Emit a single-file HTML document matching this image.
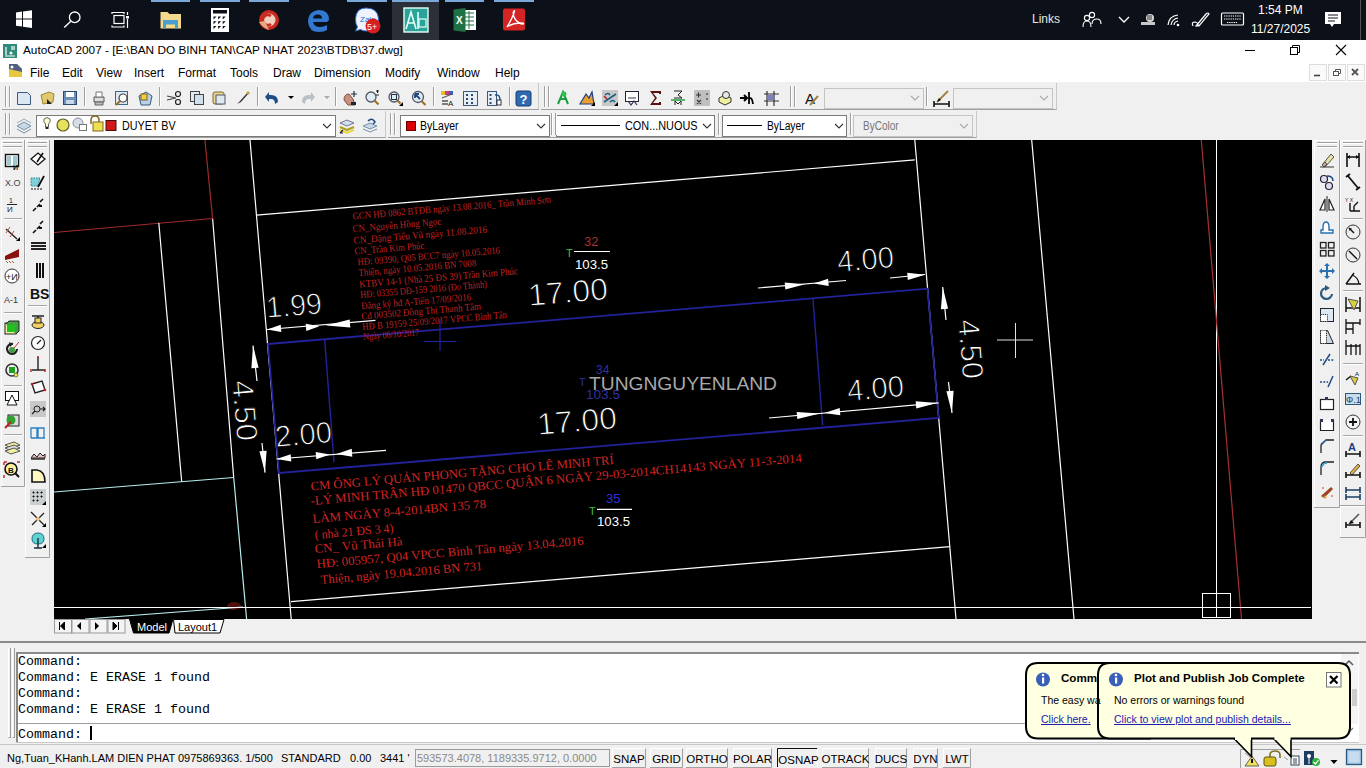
<!DOCTYPE html>
<html><head><meta charset="utf-8">
<style>
*{margin:0;padding:0;box-sizing:border-box}
html,body{width:1366px;height:768px;overflow:hidden;background:#f0f0f0;font-family:"Liberation Sans",sans-serif;color:#000}
.a{position:absolute}
.t{position:absolute;white-space:nowrap;line-height:1}
#taskbar{left:0;top:0;width:1366px;height:40px;background:#0c1119}
.hl{position:absolute;top:0;height:2px;background:#7aa8d8}
#title{left:0;top:40px;width:1366px;height:22px;background:#fff}
#menu{left:0;top:62px;width:1366px;height:20px;background:#fff}
.mi{position:absolute;top:66px;font-size:12px}
.tb{position:absolute;background:#f0f0f0;border-bottom:1px solid #a0a0a0;border-right:1px solid #c8c8c8}
.sep{position:absolute;width:2px;border-left:1px solid #a0a0a0;border-right:1px solid #fff}
.grip{position:absolute;width:5px;border-left:1px solid #a0a0a0;border-right:1px solid #a0a0a0}
.cb{position:absolute;background:#fff;border:1px solid #7a7a7a;height:22px}
.cbd{background:#f0f0f0;border-color:#c4c4c4}
.chev{position:absolute;right:6px;top:7px;width:8px;height:8px}
#draw{left:54px;top:140px;width:1258px;height:479px;background:#000;overflow:hidden}
.cmdt{position:absolute;left:18px;font-family:"Liberation Mono",monospace;font-size:13.33px;line-height:1;color:#000}
.sb{position:absolute;top:748px;height:19px;font-size:12px;border:1px solid #a0a0a0;border-top-color:#fff;border-left-color:#fff;padding-top:3px;text-align:center}
</style></head><body>

<!-- TASKBAR -->
<div id="taskbar" class="a">
  <div class="hl" style="left:151px;width:39px"></div>
  <div class="hl" style="left:200px;width:40px"></div>
  <div class="hl" style="left:249px;width:40px"></div>
  <div class="hl" style="left:347px;width:40px"></div>
  <div class="a" style="left:392px;top:0;width:47px;height:40px;background:#2b3038"></div>
  <div class="hl" style="left:392px;width:47px"></div>
  <div class="hl" style="left:445px;width:39px"></div>
  <div class="hl" style="left:494px;width:40px"></div>
  <div class="t" style="left:1032px;top:13px;font-size:12px;color:#e8e8e8">Links</div>
  <div class="t" style="left:1258px;top:4px;font-size:12px;color:#fff">1:54 PM</div>
  <div class="t" style="left:1251px;top:23px;font-size:12px;color:#fff">11/27/2025</div>
  <div class="a" style="left:1360px;top:0;width:1px;height:40px;background:#555"></div>
</div>

<!-- TITLE -->
<div id="title" class="a"></div>
<div class="t" style="left:23px;top:45px;font-size:11.8px">AutoCAD 2007 - [E:\BAN DO BINH TAN\CAP NHAT 2023\BTDB\37.dwg]</div>
<div id="menu" class="a"></div>
<div class="mi" style="left:30px">File</div>
<div class="mi" style="left:62px">Edit</div>
<div class="mi" style="left:96px">View</div>
<div class="mi" style="left:134px">Insert</div>
<div class="mi" style="left:178px">Format</div>
<div class="mi" style="left:230px">Tools</div>
<div class="mi" style="left:273px">Draw</div>
<div class="mi" style="left:314px">Dimension</div>
<div class="mi" style="left:385px">Modify</div>
<div class="mi" style="left:437px">Window</div>
<div class="mi" style="left:495px">Help</div>

<!-- TOOLBARS -->
<div class="a" style="left:0;top:82px;width:1366px;height:58px;background:#f0f0f0"></div>
<div class="tb" style="left:2px;top:83px;width:537px;height:27px"></div>
<div class="tb" style="left:541px;top:83px;width:516px;height:27px"></div>
<div class="tb" style="left:2px;top:111px;width:384px;height:27px"></div>
<div class="tb" style="left:388px;top:111px;width:589px;height:27px"></div>

<div class="cb" style="left:36px;top:115px;width:300px;"></div>
<div class="t" style="left:122px;top:120px;font-size:12.5px;transform:scaleX(0.86);transform-origin:0 0">DUYET BV</div>
<div class="cb" style="left:400px;top:115px;width:150px"></div>
<div class="a" style="left:406px;top:121px;width:10px;height:10px;background:#d00;border:1px solid #600"></div>
<div class="t" style="left:420px;top:120px;font-size:12.5px;transform:scaleX(0.84);transform-origin:0 0">ByLayer</div>
<div class="cb" style="left:556px;top:115px;width:159px"></div>
<div class="a" style="left:561px;top:125px;width:59px;height:1px;background:#000"></div>
<div class="t" style="left:625px;top:120px;font-size:12.5px;transform:scaleX(0.87);transform-origin:0 0">CON...NUOUS</div>
<div class="cb" style="left:722px;top:115px;width:125px"></div>
<div class="a" style="left:727px;top:125px;width:35px;height:1px;background:#000"></div>
<div class="t" style="left:767px;top:120px;font-size:12.5px;transform:scaleX(0.82);transform-origin:0 0">ByLayer</div>
<div class="cb cbd" style="left:853px;top:115px;width:120px"></div>
<div class="t" style="left:863px;top:120px;font-size:12.5px;color:#777;transform:scaleX(0.8);transform-origin:0 0">ByColor</div>
<div class="cb cbd" style="left:824px;top:88px;width:100px;height:21px"></div>
<div class="cb cbd" style="left:953px;top:88px;width:100px;height:21px"></div>

<!-- SIDE TOOLBARS -->
<div class="a" style="left:0;top:140px;width:54px;height:500px;background:#f0f0f0"></div>

<!-- DRAWING -->
<div id="draw" class="a"></div>
<svg class="a" style="left:54px;top:140px" width="1258" height="479" viewBox="54 140 1258 479" xmlns="http://www.w3.org/2000/svg">
<ellipse cx="234" cy="606" rx="7" ry="4" fill="#501010"/>
<line x1="250" y1="140" x2="291.2" y2="619" stroke="#ffffff" stroke-width="1.2" />
<line x1="212.6" y1="218.5" x2="233.7" y2="477.5" stroke="#ffffff" stroke-width="1.2" />
<line x1="233.7" y1="477.5" x2="246.6" y2="619" stroke="#b8ecec" stroke-width="1.2" />
<line x1="204.9" y1="140" x2="212.6" y2="218.5" stroke="#a02a2a" stroke-width="1.2" />
<line x1="54" y1="232.5" x2="212.6" y2="218.5" stroke="#a02a2a" stroke-width="1.2" />
<line x1="158.8" y1="222.9" x2="181.7" y2="481.7" stroke="#ffffff" stroke-width="1.2" />
<line x1="54" y1="492" x2="233.7" y2="477.5" stroke="#b8ecec" stroke-width="1.2" />
<line x1="85" y1="619" x2="243" y2="607" stroke="#b8ecec" stroke-width="1.2" />
<line x1="256.5" y1="215.2" x2="914.8" y2="159.9" stroke="#ffffff" stroke-width="1.2" />
<line x1="914.8" y1="140" x2="956" y2="619" stroke="#ffffff" stroke-width="1.2" />
<line x1="1031.7" y1="140" x2="1074" y2="619" stroke="#ffffff" stroke-width="1.2" />
<line x1="1216.5" y1="140" x2="1216.5" y2="607.5" stroke="#ffffff" stroke-width="1" />
<line x1="1201.3" y1="140" x2="1241.5" y2="619" stroke="#a83030" stroke-width="1.2" />
<line x1="291" y1="601.7" x2="950" y2="546.7" stroke="#ffffff" stroke-width="1.2" />
<line x1="54" y1="607.5" x2="1311" y2="607.5" stroke="#ffffff" stroke-width="1.2" />
<rect x="1202.5" y="593.5" width="28" height="24" fill="none" stroke="#fff" stroke-width="1"/>
<line x1="1216.5" y1="593.5" x2="1216.5" y2="617.5" stroke="#ffffff" stroke-width="1" />
<line x1="997" y1="340" x2="1033" y2="340" stroke="#e0e0e0" stroke-width="1" />
<line x1="1015.5" y1="323" x2="1015.5" y2="358" stroke="#e0e0e0" stroke-width="1" />
<polygon points="268,344 927.5,288.7 938.7,418 279,473" fill="none" stroke="#22229a" stroke-width="1.8"/>
<line x1="324.6" y1="339" x2="334" y2="462" stroke="#22229a" stroke-width="1.4" />
<line x1="813" y1="299" x2="822.6" y2="425.6" stroke="#22229a" stroke-width="1.4" />
<line x1="440" y1="319" x2="440" y2="351" stroke="#22229a" stroke-width="1.2" />
<line x1="424" y1="341.5" x2="456" y2="341.5" stroke="#22229a" stroke-width="1.2" />
<line x1="267" y1="329.5" x2="375.4" y2="320.4" stroke="#ffffff" stroke-width="1.2" />
<polygon points="267.3,329.5 281.3,331.9 280.7,324.7" fill="#ffffff"/>
<polygon points="319.4,326.2 305.7,323.7 306.3,330.9" fill="#ffffff"/>
<polygon points="326.0,325.6 350.3,327.6 349.7,319.6" fill="#ffffff"/>
<text x="267" y="318" font-family="Liberation Sans" font-size="30" fill="#ffffff" transform="rotate(-4.8 267 318)" textLength="56" lengthAdjust="spacingAndGlyphs"  stroke="#000" stroke-width="0.9">1.99</text>
<line x1="758" y1="288" x2="846" y2="280.5" stroke="#ffffff" stroke-width="1.2" />
<polygon points="805.0,284.3 784.7,282.4 785.3,289.6" fill="#ffffff"/>
<polygon points="813.8,283.6 828.7,286.0 828.1,278.8" fill="#ffffff"/>
<line x1="890" y1="278" x2="925" y2="274.5" stroke="#ffffff" stroke-width="1.2" />
<polygon points="925.0,274.8 907.2,272.7 907.8,279.9" fill="#ffffff"/>
<text x="529" y="306" font-family="Liberation Sans" font-size="31" fill="#ffffff" transform="rotate(-4.8 529 306)" textLength="80" lengthAdjust="spacingAndGlyphs"  stroke="#000" stroke-width="0.9">17.00</text>
<text x="838" y="272" font-family="Liberation Sans" font-size="30" fill="#ffffff" transform="rotate(-4.8 838 272)" textLength="57" lengthAdjust="spacingAndGlyphs"  stroke="#000" stroke-width="0.9">4.00</text>
<line x1="942.7" y1="287" x2="946" y2="320" stroke="#ffffff" stroke-width="1.2" />
<polygon points="942.7,287.0 940.9,309.3 948.1,308.7" fill="#ffffff"/>
<line x1="948.5" y1="382" x2="952" y2="413" stroke="#ffffff" stroke-width="1.2" />
<polygon points="952.0,413.0 953.6,390.7 946.4,391.3" fill="#ffffff"/>
<text x="958" y="320" font-family="Liberation Sans" font-size="30" fill="#ffffff" transform="rotate(85.2 958 320)" textLength="60" lengthAdjust="spacingAndGlyphs"  stroke="#000" stroke-width="0.9">4.50</text>
<line x1="253" y1="345.6" x2="257" y2="381" stroke="#ffffff" stroke-width="1.2" />
<polygon points="253.0,345.6 251.4,368.3 258.6,367.7" fill="#ffffff"/>
<line x1="262" y1="443" x2="265" y2="472.6" stroke="#ffffff" stroke-width="1.2" />
<polygon points="265.0,472.6 266.6,450.7 259.4,451.3" fill="#ffffff"/>
<text x="232" y="381" font-family="Liberation Sans" font-size="30" fill="#ffffff" transform="rotate(85.2 232 381)" textLength="61" lengthAdjust="spacingAndGlyphs"  stroke="#000" stroke-width="0.9">4.50</text>
<line x1="276.6" y1="459" x2="386" y2="450.3" stroke="#ffffff" stroke-width="1.2" />
<polygon points="276.6,459.0 291.3,461.4 290.7,454.2" fill="#ffffff"/>
<polygon points="330.0,454.6 315.7,452.1 316.3,459.3" fill="#ffffff"/>
<polygon points="336.5,454.1 352.3,456.8 351.7,448.8" fill="#ffffff"/>
<text x="276" y="447" font-family="Liberation Sans" font-size="30" fill="#ffffff" transform="rotate(-4.8 276 447)" textLength="57" lengthAdjust="spacingAndGlyphs"  stroke="#000" stroke-width="0.9">2.00</text>
<text x="538" y="435" font-family="Liberation Sans" font-size="31" fill="#ffffff" transform="rotate(-4.8 538 435)" textLength="80" lengthAdjust="spacingAndGlyphs"  stroke="#000" stroke-width="0.9">17.00</text>
<line x1="769" y1="418" x2="938.7" y2="402.8" stroke="#ffffff" stroke-width="1.2" />
<polygon points="820.0,413.5 796.7,411.9 797.3,419.1" fill="#ffffff"/>
<polygon points="824.5,413.1 840.3,415.3 839.7,408.1" fill="#ffffff"/>
<polygon points="937.0,403.0 915.7,401.2 916.3,408.4" fill="#ffffff"/>
<text x="848" y="401" font-family="Liberation Sans" font-size="30" fill="#ffffff" transform="rotate(-4.8 848 401)" textLength="57" lengthAdjust="spacingAndGlyphs"  stroke="#000" stroke-width="0.9">4.00</text>
<text x="584" y="246" font-family="Liberation Sans" font-size="13" fill="#a83030" transform="rotate(0 584 246)" >32</text>
<line x1="574" y1="251.5" x2="610" y2="251.5" stroke="#ffffff" stroke-width="1.2" />
<text x="575" y="269" font-family="Liberation Sans" font-size="13.5" fill="#ffffff" transform="rotate(0 575 269)" textLength="33" lengthAdjust="spacingAndGlyphs" >103.5</text>
<text x="566" y="257" font-family="Liberation Sans" font-size="11" fill="#40c040" transform="rotate(0 566 257)" >T</text>
<text x="596" y="374" font-family="Liberation Sans" font-size="12" fill="#3030a0" transform="rotate(0 596 374)" >34</text>
<text x="579" y="386" font-family="Liberation Sans" font-size="11" fill="#3030a0" transform="rotate(0 579 386)" >T</text>
<text x="586" y="399" font-family="Liberation Sans" font-size="12" fill="#3030a0" transform="rotate(0 586 399)" textLength="34" lengthAdjust="spacingAndGlyphs" >103.5</text>
<text x="606" y="503" font-family="Liberation Sans" font-size="13" fill="#3030d8" transform="rotate(0 606 503)" >35</text>
<line x1="597" y1="509.4" x2="632" y2="509.4" stroke="#ffffff" stroke-width="1.2" />
<text x="597" y="526" font-family="Liberation Sans" font-size="13.5" fill="#ffffff" transform="rotate(0 597 526)" textLength="33" lengthAdjust="spacingAndGlyphs" >103.5</text>
<text x="589" y="515" font-family="Liberation Sans" font-size="11" fill="#40c040" transform="rotate(0 589 515)" >T</text>
<text x="589" y="389.5" font-family="Liberation Sans" font-size="17.5" fill="#a8a8a8" transform="rotate(0 589 389.5)" textLength="188" lengthAdjust="spacingAndGlyphs" >TUNGNGUYENLAND</text>
<text x="311" y="490.5" font-family="Liberation Serif" font-size="12.5" fill="#d02424" transform="rotate(-5 311 490.5)" textLength="304" lengthAdjust="spacingAndGlyphs" >CM ÔNG LÝ QUẢN PHONG TẶNG CHO LÊ MINH TRÍ</text>
<text x="311" y="505" font-family="Liberation Serif" font-size="12.5" fill="#d02424" transform="rotate(-5 311 505)" textLength="493" lengthAdjust="spacingAndGlyphs" >-LÝ MINH TRÂN HĐ 01470 QBCC QUẬN 6  NGÀY 29-03-2014CH14143 NGÀY 11-3-2014</text>
<text x="313" y="523" font-family="Liberation Serif" font-size="12.5" fill="#d02424" transform="rotate(-5 313 523)" textLength="174" lengthAdjust="spacingAndGlyphs" >LÀM NGÀY 8-4-2014BN 135 78</text>
<text x="315" y="539" font-family="Liberation Serif" font-size="12.5" fill="#d02424" transform="rotate(-5 315 539)" textLength="79" lengthAdjust="spacingAndGlyphs" >( nhà 21 ĐS 3 4)</text>
<text x="315" y="553" font-family="Liberation Serif" font-size="12.5" fill="#d02424" transform="rotate(-5 315 553)" textLength="88" lengthAdjust="spacingAndGlyphs" >CN_ Vũ Thái Hà</text>
<text x="317" y="568" font-family="Liberation Serif" font-size="12.5" fill="#d02424" transform="rotate(-5 317 568)" textLength="268" lengthAdjust="spacingAndGlyphs" >HĐ: 005957, Q04 VPCC Bình Tân ngày 13.04.2016</text>
<text x="321" y="584" font-family="Liberation Serif" font-size="12.5" fill="#d02424" transform="rotate(-5 321 584)" textLength="162" lengthAdjust="spacingAndGlyphs" >Thiện, ngày 19.04.2016 BN 731</text>
<text x="352.8" y="219.4" font-family="Liberation Serif" font-size="10" fill="#c02020" transform="rotate(-4.8 352.8 219.4)" textLength="199" lengthAdjust="spacingAndGlyphs" >GCN HĐ 0862 BTĐB ngày 13.08.2016_ Trần Minh Sơn</text>
<text x="352.8" y="232.1" font-family="Liberation Serif" font-size="10" fill="#c02020" transform="rotate(-4.8 352.8 232.1)" textLength="89" lengthAdjust="spacingAndGlyphs" >CN_Nguyễn Hồng Ngọc</text>
<text x="353.8" y="243.8" font-family="Liberation Serif" font-size="10" fill="#c02020" transform="rotate(-4.8 353.8 243.8)" textLength="134" lengthAdjust="spacingAndGlyphs" >CN_Đặng Tiểu Vũ ngày 11.08.2016</text>
<text x="354.8" y="254.6" font-family="Liberation Serif" font-size="10" fill="#c02020" transform="rotate(-4.8 354.8 254.6)" textLength="70" lengthAdjust="spacingAndGlyphs" >CN_Trần Kim Phúc</text>
<text x="357.7" y="265.3" font-family="Liberation Serif" font-size="10" fill="#c02020" transform="rotate(-4.8 357.7 265.3)" textLength="143" lengthAdjust="spacingAndGlyphs" >HĐ: 09390, Q05 BCC7 ngày 10.05.2016</text>
<text x="358.7" y="276" font-family="Liberation Serif" font-size="10" fill="#c02020" transform="rotate(-4.8 358.7 276)" textLength="118" lengthAdjust="spacingAndGlyphs" >Thiện, ngày 10.05.2016 BN 7008</text>
<text x="359.6" y="287.5" font-family="Liberation Serif" font-size="10" fill="#c02020" transform="rotate(-4.8 359.6 287.5)" textLength="159" lengthAdjust="spacingAndGlyphs" >KTBV 14-1 (Nhà 25 ĐS 39) Trần Kim Phúc</text>
<text x="360.6" y="298" font-family="Liberation Serif" font-size="10" fill="#c02020" transform="rotate(-4.8 360.6 298)" textLength="127" lengthAdjust="spacingAndGlyphs" >HĐ: 03355 DĐ-159 2016 (Đo Thành)</text>
<text x="361.6" y="309.3" font-family="Liberation Serif" font-size="10" fill="#c02020" transform="rotate(-4.8 361.6 309.3)" textLength="110" lengthAdjust="spacingAndGlyphs" >Đăng ký bđ A-Tiến 17/09/2016</text>
<text x="361.6" y="319.5" font-family="Liberation Serif" font-size="10" fill="#c02020" transform="rotate(-4.8 361.6 319.5)" textLength="120" lengthAdjust="spacingAndGlyphs" >Cđ 003502 Đồng Thị Thanh Tâm</text>
<text x="362.6" y="330" font-family="Liberation Serif" font-size="10" fill="#c02020" transform="rotate(-4.8 362.6 330)" textLength="145" lengthAdjust="spacingAndGlyphs" >HĐ B 19159 25/09/2017 VPCC Bình Tân</text>
<text x="363.5" y="340" font-family="Liberation Serif" font-size="10" fill="#c02020" transform="rotate(-4.8 363.5 340)" textLength="56" lengthAdjust="spacingAndGlyphs" >Ngày 06/10/2017</text>
</svg>

<!-- TABS -->

<!-- COMMAND -->
<div class="a" style="left:0;top:641px;width:1366px;height:2px;background:#8a8a8a"></div>
<div class="a" style="left:16px;top:652px;width:1343px;height:91px;background:#fff;border-top:2px solid #8a8a8a;border-left:2px solid #8a8a8a"></div>
<div class="a" style="left:18px;top:723px;width:1322px;height:1px;background:#a0a0a0"></div>
<div class="a" style="left:8px;top:648px;width:3px;height:90px;border-left:1px solid #fff;border-right:1px solid #9a9a9a;border-bottom:1px solid #9a9a9a"></div>
<div class="a" style="left:12px;top:648px;width:3px;height:90px;border-left:1px solid #fff;border-right:1px solid #9a9a9a;border-bottom:1px solid #9a9a9a"></div>
<div class="a" style="left:1341px;top:654px;width:17px;height:70px;background:#f4f4f4"></div>
<div class="a" style="left:1352px;top:689px;width:5px;height:17px;background:#cdcdcd"></div>
<div class="a" style="left:16px;top:742px;width:1343px;height:1px;background:#c8c8c8"></div>
<div class="cmdt" style="top:655px">Command:</div>
<div class="cmdt" style="top:671px">Command: E ERASE 1 found</div>
<div class="cmdt" style="top:687px">Command:</div>
<div class="cmdt" style="top:703px">Command: E ERASE 1 found</div>
<div class="cmdt" style="top:728px">Command:</div>
<div class="a" style="left:90px;top:726px;width:2px;height:14px;background:#000"></div>

<!-- STATUS -->
<div class="a" style="left:0;top:744px;width:1366px;height:1px;background:#c8c8c8"></div>
<div class="t" style="left:7px;top:753px;font-size:11px">Ng,Tuan_KHanh.LAM DIEN PHAT 0975869363. 1/500</div>
<div class="t" style="left:281px;top:753px;font-size:11px">STANDARD</div>
<div class="t" style="left:350px;top:753px;font-size:11px">0.00</div>
<div class="t" style="left:380px;top:753px;font-size:11px">3441 '</div>
<div class="a" style="left:415px;top:749px;width:195px;height:18px;background:#f0f0f0;border:1px solid #9a9a9a"></div>
<div class="t" style="left:417px;top:753px;font-size:11px;color:#8a8a8a">593573.4078, 1189335.9712, 0.0000</div>


<svg class="a" style="left:0;top:0" width="1366" height="768" xmlns="http://www.w3.org/2000/svg">
<path d="M16,12.5 L22,11.6 L22,18.6 L16,18.6Z M23,11.4 L32,10.2 L32,18.6 L23,18.6Z M16,19.6 L22,19.6 L22,26.6 L16,25.8Z M23,19.6 L32,19.6 L32,28 L23,26.8Z" fill="#fff"/>
<circle cx="74.7" cy="17.3" r="5.3" fill="none" stroke="#fff" stroke-width="1.3"/><line x1="70.8" y1="21.2" x2="64.2" y2="27.6" stroke="#fff" stroke-width="1.4"/>
<rect x="114" y="15.5" width="10" height="8" fill="none" stroke="#fff" stroke-width="1.2"/><path d="M112,12.5 H124 M112,27 H124 M112,12 V14 M124,12 V14 M112,25.5 V27.5 M124,25.5V27.5 M127.5,12 V15 M127.5,19 V28" stroke="#fff" stroke-width="1.2" fill="none"/><rect x="126" y="16" width="3" height="2.5" fill="#fff"/>
<path d="M160.5,12 h7 l2,2 h11.5 v14.5 h-20.5z" fill="#f3d98b"/><path d="M163,20 h15 v8.4 h-3 v-4 h-9 v4 h-3z" fill="#4a9fd0"/>
<rect x="211" y="8" width="18" height="24" fill="#fff"/><rect x="213" y="10" width="14" height="3.5" fill="#0a0e15"/>
<path d="M213.5,16.5 h3 l-3,3z" fill="#0a0e15"/>
<path d="M218.1,16.5 h3 l-3,3z" fill="#0a0e15"/>
<path d="M222.7,16.5 h3 l-3,3z" fill="#0a0e15"/>
<path d="M213.5,21.3 h3 l-3,3z" fill="#0a0e15"/>
<path d="M218.1,21.3 h3 l-3,3z" fill="#0a0e15"/>
<path d="M222.7,21.3 h3 l-3,3z" fill="#0a0e15"/>
<path d="M213.5,26.1 h3 l-3,3z" fill="#0a0e15"/>
<path d="M218.1,26.1 h3 l-3,3z" fill="#0a0e15"/>
<path d="M222.7,26.1 h3 l-3,3z" fill="#0a0e15"/>
<circle cx="269" cy="20" r="10" fill="#c82a20"/><circle cx="269" cy="20" r="6.5" fill="#f0d0c0"/><path d="M271,16 a5,5 0 1 0 0,8" fill="none" stroke="#c82a20" stroke-width="2.6"/><path d="M259,22 q4,6 10,8 l-4,-9z" fill="#e8a880"/>
<path d="M327,22 H313 q1,5 7,5 q4,0 7,-2 v5 q-3,2 -8,2 q-10,0 -11,-10 q0,-11 11,-12 q10,0 10,10z M313,18.5 H322 q0,-4 -4.5,-4 q-4,0 -4.5,4z" fill="#3277d0"/>
<path d="M366,8 q12,0 12.5,11 q0,11 -12,12 q-4,0 -6,-1.5 l-5,1.5 l2,-4 q-2,-3 -2,-8 q0.5,-11 10.5,-11z" fill="#eef3ff" stroke="#2a6bd0" stroke-width="1"/><text x="360" y="22" font-family="Liberation Sans" font-size="8" fill="#2a6bd0">Zalo</text><circle cx="373" cy="26" r="7.5" fill="#d81e1e"/><text x="367" y="30" font-family="Liberation Sans" font-size="9" fill="#fff">5+</text>
<rect x="404" y="8" width="24" height="24" fill="#2aa39a" stroke="#e8fff8" stroke-width="1.4"/><path d="M406,29 L411,12 L416,29 M408.5,23 H414 M418,12 V29" stroke="#e8fff8" stroke-width="1.6" fill="none"/><rect x="419" y="19" width="7" height="8" fill="none" stroke="#e8fff8" stroke-width="1.2"/>
<rect x="462" y="10" width="14" height="20" fill="#fff"/><path d="M464,13h10M464,17h10M464,21h10M464,25h10M469,11v18" stroke="#1e7145" stroke-width="1"/><path d="M453.5,9.5 l12,-1.5 v24 l-12,-1.5z" fill="#1e7145"/><text x="456" y="24" font-family="Liberation Sans" font-size="10" font-weight="bold" fill="#fff">X</text>
<rect x="503" y="8.5" width="22" height="22" rx="2" fill="#d42424"/><path d="M507,27 q4,-6 7,-14 q1,-3 0,-2 q-2,2 1,8 q4,5 8,5 q2,-1 -3,-1 q-6,0 -12,3z" fill="none" stroke="#fff" stroke-width="1.4"/>
<circle cx="1092" cy="15" r="2.6" fill="none" stroke="#fff" stroke-width="1.1"/><path d="M1083,27 q0,-6 4,-6 q4,0 4,6" fill="none" stroke="#fff" stroke-width="1.1"/><circle cx="1087" cy="18" r="2.6" fill="#0a0e15" stroke="#fff" stroke-width="1.1"/><path d="M1092,24 q0,-5 5,-5 q4,0 4,5" fill="none" stroke="#fff" stroke-width="1.1"/>
<path d="M1119,17 l5,5 l5,-5" fill="none" stroke="#fff" stroke-width="1.3"/>
<path d="M1141,22 h14 v3 h-14z" fill="#c8c8c8"/><circle cx="1150" cy="18" r="4" fill="#d8d8d8"/><rect x="1147" y="15" width="5" height="5" fill="#888"/>
<path d="M1168,25 q1,-9 10,-10 M1171,25 q1,-6 7,-7 M1174,25 q0,-3 4,-4" fill="none" stroke="#fff" stroke-width="1.2"/><circle cx="1178" cy="25" r="1.3" fill="#fff"/>
<path d="M1196,26 l10,-12 q2,-2 3,0 l-10,12z M1193,26 q-2,-4 2,-4 q4,1 3,4" fill="none" stroke="#fff" stroke-width="1.2"/>
<rect x="1221.5" y="13" width="22" height="12" rx="1" fill="none" stroke="#fff" stroke-width="1.2"/><path d="M1224,16h17M1224,19h17M1227,22.5h11" stroke="#fff" stroke-width="1" stroke-dasharray="1.3,0.9"/>
<path d="M1325,12 h16 v12 h-7 l-2,3 l-2,-3 h-5z" fill="#fff"/><path d="M1328,15h10M1328,18h10M1328,21h7" stroke="#0a0e15" stroke-width="1"/>
<rect x="3" y="44" width="14" height="14" fill="#2e8a7a"/><path d="M5,56 h10 M6,47 v8 M12,46 v4 M14,46v4" stroke="#fff" stroke-width="1.2"/><circle cx="11" cy="53" r="1.6" fill="#fff"/>
<path d="M9,64 h8 l5,5 v8 h-13z" fill="#e8c840"/><path d="M9,64 h8 l5,5 v3 l-13,-3z" fill="#506080"/><circle cx="12" cy="67" r="1.5" fill="#fff"/>
<path d="M1245,50.5 h10" stroke="#000" stroke-width="1"/><rect x="1290.5" y="47.5" width="7" height="7" fill="none" stroke="#000"/><path d="M1292.5,47.5 v-2 h7 v7 h-2" fill="none" stroke="#000"/><path d="M1336,45 l10,10 M1346,45 l-10,10" stroke="#000" stroke-width="1.1"/>
<rect x="1309.5" y="64.5" width="17" height="16" fill="#fafafa" stroke="#ddd"/><rect x="1328.5" y="64.5" width="17" height="16" fill="#fafafa" stroke="#ddd"/><rect x="1347.5" y="64.5" width="17" height="16" fill="#fafafa" stroke="#ddd"/>
<path d="M1314,75.5h6" stroke="#444" stroke-width="1.6"/><rect x="1333.5" y="71.5" width="5" height="4" fill="none" stroke="#555"/><path d="M1335.5,71.5v-2h5v4h-2" fill="none" stroke="#555"/><path d="M1352,69 l6,6 M1358,69 l-6,6" stroke="#555" stroke-width="1.8"/>
<g transform="translate(16,90)"><path d="M1.5,2.5 h10 l3,3 v9 h-13z" fill="#dbe8f3" stroke="#3a5a80"/></g>
<g transform="translate(39,90)"><path d="M2,5 l8,-3 l5,2 l-1,8 l-10,2z" fill="#e0c870" stroke="#a08830"/><path d="M8,9 l5,5 h-5z" fill="#222"/></g>
<g transform="translate(62,90)"><rect x="1.5" y="1.5" width="13" height="13" fill="#6a90b8" stroke="#2a4a70"/><rect x="4" y="2" width="8" height="5" fill="#fff"/><rect x="4" y="10" width="8" height="4" fill="#c8d8e8"/></g>
<g transform="translate(91,90)"><path d="M3,7 h10 v5 h-10z" fill="#ddd" stroke="#555"/><path d="M5,2 h6 v5 h-6z" fill="#fff" stroke="#777"/><path d="M4,12 h8 v3 h-8z" fill="#bbb" stroke="#666"/></g>
<g transform="translate(114,90)"><rect x="1.5" y="1.5" width="12" height="13" fill="#dde8f0" stroke="#3a6a90"/><circle cx="9" cy="8" r="4" fill="#fff" stroke="#444" stroke-width="1.2"/><path d="M6,11 l-4,4" stroke="#a07020" stroke-width="2"/></g>
<g transform="translate(137,90)"><path d="M2,6 l7,-4 l6,4 l-2,9 l-9,0z" fill="#b8d0e8" stroke="#3a5a80"/><rect x="4" y="4" width="6" height="6" fill="#f0d040" stroke="#806020"/></g>
<g transform="translate(166,90)"><circle cx="12" cy="4" r="2.5" fill="none" stroke="#222" stroke-width="1.2"/><circle cx="12" cy="12" r="2.5" fill="none" stroke="#222" stroke-width="1.2"/><path d="M1,6 l9,2 M1,10 l9,-2" stroke="#444" stroke-width="1.2"/></g>
<g transform="translate(189,90)"><rect x="1.5" y="1.5" width="9" height="10" fill="#e0eaf2" stroke="#444"/><rect x="5.5" y="4.5" width="9" height="10" fill="#d0e0ee" stroke="#444"/></g>
<g transform="translate(211,90)"><rect x="2" y="2" width="11" height="12" rx="2" fill="#e8d890" stroke="#806830"/><rect x="5" y="5" width="9" height="9" fill="#dde8f0" stroke="#556"/></g>
<g transform="translate(235,90)"><path d="M2,14 l3,-3 l8,-9 l1,1 l-8,9z" fill="#333"/><path d="M11,3 l2,-2 l2,2 l-2,2z" fill="#c8a040"/></g>
<g transform="translate(264,90)"><path d="M14,12 q0,-7 -7,-7 h-2 v-3 l-4,5 l4,5 v-3 h2 q4,0 4,5z" fill="#1d4d86"/></g>
<g transform="translate(342,90)"><path d="M2,10 q0,-6 5,-6 l4,5 l2,6 h-7z" fill="#c89080" stroke="#805040"/><path d="M12,1 v6 M9,4 h6" stroke="#234" stroke-width="1.2"/><rect x="9" y="12" width="5" height="3" fill="#223"/></g>
<g transform="translate(364,90)"><circle cx="7" cy="7" r="5" fill="#e0ecf4" stroke="#556" stroke-width="1.3"/><path d="M10.5,10.5 l4,4" stroke="#a07020" stroke-width="2.2"/><path d="M12,1 h3 M13.5,0 v3 M12,5 h3" stroke="#222"/></g>
<g transform="translate(387,90)"><circle cx="7" cy="7" r="5" fill="#e0ecf4" stroke="#556" stroke-width="1.3"/><rect x="4.5" y="4.5" width="5" height="5" fill="none" stroke="#234"/><path d="M10.5,10.5 l3,3" stroke="#a07020" stroke-width="2.2"/><path d="M12,16 l4,-4 v4z" fill="#000"/></g>
<g transform="translate(410,90)"><circle cx="8" cy="7" r="5.5" fill="#e0ecf4" stroke="#556" stroke-width="1.3"/><path d="M5,4 l5,5 M5,4 h4 M5,4 v4" stroke="#1d4d86" stroke-width="1.8"/><path d="M11.5,11 l4,4" stroke="#a07020" stroke-width="2.2"/></g>
<g transform="translate(439,90)"><rect x="2" y="1" width="12" height="4" fill="#c04080"/><rect x="2" y="1" width="4" height="4" fill="#e0c020"/><rect x="10" y="1" width="4" height="4" fill="#4060c0"/><path d="M3,8 l10,-4 M3,11 h6 M3,14 h6" stroke="#555" stroke-width="1.3"/><text x="9" y="16" font-size="8" font-family="Liberation Sans" fill="#222">A</text></g>
<g transform="translate(462,90)"><rect x="1.5" y="1.5" width="14" height="14" fill="#e8eef4" stroke="#3a5a80"/><path d="M4,4h2v2h-2zM9,4h2v2h-2zM4,8h2v2h-2zM9,8h2v2h-2zM4,12h2v2h-2zM9,12h2v2h-2z" fill="#2a4a70"/></g>
<g transform="translate(486,90)"><rect x="1.5" y="1.5" width="9" height="14" fill="#e8eef4" stroke="#3a5a80"/><path d="M3.5,4h2v2h-2zM3.5,8h2v2h-2zM3.5,12h2v2h-2z" fill="#2a4a70"/><path d="M9,5 q5,-1 5,5" fill="none" stroke="#1d4d86" stroke-width="1.4"/><rect x="11" y="10" width="4" height="5" fill="#fff" stroke="#333"/></g>
<g transform="translate(515,90)"><rect x="1" y="1" width="15" height="15" rx="2" fill="#2e6ab0" stroke="#1a3f70"/><text x="4.5" y="14" font-size="13" font-weight="bold" font-family="Liberation Sans" fill="#fff">?</text></g>
<g transform="translate(300,90)"><path d="M2,12 q0,-7 7,-7 h2 v-3 l4,5 l-4,5 v-3 h-2 q-4,0 -4,5z" fill="#b8c0c8"/></g>
<g transform="translate(288,96)"><path d="M0,0 h6 l-3,3z" fill="#000"/></g><g transform="translate(324,96)"><path d="M0,0 h6 l-3,3z" fill="#aaa"/></g>
<g transform="translate(556,90)"><path d="M2,14 l5,-12 l5,12 M4,9 h7" fill="none" stroke="#18a040" stroke-width="2"/><circle cx="8" cy="4" r="2.5" fill="#30c050"/></g>
<g transform="translate(579,90)"><path d="M1,14 l6,-10 l3,4 l3,-6 l2,12z" fill="#e8a030" stroke="#1d3d86" stroke-width="1.2"/><path d="M12,16 l4,-4 v4z" fill="#000"/></g>
<g transform="translate(602,90)"><rect x="0" y="0" width="16" height="16" fill="#c8c8c8"/><path d="M2,12 l12,-8 M3,5 q3,-3 5,0 M8,12 q3,-3 5,0" stroke="#186080" stroke-width="1.6" fill="none"/><path d="M2,6 l3,3" stroke="#b02020" stroke-width="1.4"/><path d="M12,16 l4,-4 v4z" fill="#000"/></g>
<g transform="translate(624,90)"><rect x="1.5" y="1.5" width="13" height="10" fill="#fff" stroke="#223"/><path d="M4,11 l3,4 l3,-4 l3,4" fill="none" stroke="#335" stroke-width="1.2"/><path d="M4,8h8" stroke="#335"/></g>
<g transform="translate(648,90)"><path d="M2,1 h11 v3 h-2 v-1 h-6 l4,5 l-4,5 h6 v-1 h2 v3 h-11 l5,-7z" fill="#5a1010"/></g>
<g transform="translate(670,90)"><path d="M4,1 h8 l-4,4 l4,3 h-8" fill="none" stroke="#222" stroke-width="1"/><path d="M1,10 h14" stroke="#20a040" stroke-width="1.5"/><path d="M5,15 v-4 l3,3 l3,-3 v4" stroke="#222" fill="none"/></g>
<g transform="translate(694,90)"><rect x="0" y="0" width="16" height="16" fill="#c0c0c0"/><path d="M2,5h5M4.5,2.5v5M3,10l4,4M7,10l-4,4M13,3v2M13,8v2" stroke="#333" stroke-width="1.1"/></g>
<g transform="translate(717,90)"><path d="M2,8 l6,-3 l6,3 v4 l-6,3 l-6,-3z" fill="#f0f0a0" stroke="#333"/><circle cx="9" cy="5" r="3.5" fill="#e8e8e8" stroke="#333"/></g>
<g transform="translate(739,90)"><path d="M1,8 h7 M5,5 l3,3 l-3,3" stroke="#000" stroke-width="2" fill="none"/><path d="M10,2 v12 M10,9 q3,-3 4,5" stroke="#000" stroke-width="1.8" fill="none"/></g>
<g transform="translate(763,90)"><path d="M4,1v15M11,1v15M1,4h15M1,11h15" stroke="#333" stroke-width="1.2"/><rect x="5" y="5" width="5" height="5" fill="#8080c0"/></g>
<g transform="translate(804,90)"><text x="1" y="14" font-size="15" font-family="Liberation Sans" fill="#111">A</text><path d="M6,15 l8,-9" stroke="#a08040" stroke-width="2"/></g>
<g transform="translate(933,90)"><path d="M1,14 h15 M1,11v6 M16,11v6" stroke="#111" stroke-width="1.6"/><path d="M4,12 l11,-11" stroke="#a08040" stroke-width="1.8"/><path d="M4,12 l4,-2 l-2,-2z" fill="#111"/></g>
<g transform="translate(16,117)"><path d="M1,9 l7,-4 l7,4 l-7,4z" fill="#c8d8e8" stroke="#7890a8"/><path d="M1,12 l7,4 l7,-4" fill="none" stroke="#7890a8"/><path d="M1,6 l7,-4 l7,4" fill="none" stroke="#9ab"/></g>
<path d="M44,119 q3,-3 6,0 q1,3 -1.5,5 v3 h-3 v-3 q-2.5,-2 -1.5,-5z" fill="#fffbd0" stroke="#666"/><rect x="45.5" y="127" width="3" height="2" fill="#222"/>
<circle cx="63" cy="125" r="6" fill="#e8e060" stroke="#606020" stroke-width="1.2"/>
<circle cx="78" cy="123" r="5" fill="#d8dce4" stroke="#8a8fa0"/><rect x="79.5" y="124.5" width="7" height="6" fill="#fff" stroke="#777"/>
<path d="M91,124 v-4 q0,-4 4,-4 q4,0 4,4 v2" fill="none" stroke="#806820" stroke-width="1.5"/><rect x="93" y="122" width="10" height="9" fill="#f0e050" stroke="#806820"/>
<rect x="106" y="120.5" width="10" height="10" fill="#d01818" stroke="#401010"/>
<g transform="translate(339,117)"><path d="M1,6 l7,-3 l7,3 l-7,3z" fill="#d0e0f0" stroke="#778"/><path d="M1,10 l7,3 l7,-3" stroke="#b0a020" stroke-width="2.4" fill="none"/><path d="M1,13 l7,3 l7,-3" stroke="#e8d020" stroke-width="1.6" fill="none"/><path d="M1,16 l3,-3 M1,16 h3 v-0" stroke="#223" stroke-width="1.2"/></g>
<g transform="translate(362,117)"><path d="M1,9 l7,-3 l7,3 l-7,3z" fill="#c8d8e8" stroke="#7890a8"/><path d="M1,12 l7,3 l7,-3" fill="none" stroke="#7890a8"/><path d="M6,4 q4,-4 7,1 l-2,2" fill="none" stroke="#1d4d86" stroke-width="1.6"/></g>
<path d="M323,124 l4,4 l4,-4" fill="none" stroke="#333" stroke-width="1.1"/>
<path d="M537,124 l4,4 l4,-4" fill="none" stroke="#333" stroke-width="1.1"/>
<path d="M703,124 l4,4 l4,-4" fill="none" stroke="#333" stroke-width="1.1"/>
<path d="M835,124 l4,4 l4,-4" fill="none" stroke="#333" stroke-width="1.1"/>
<path d="M960,124 l4,4 l4,-4" fill="none" stroke="#aaa" stroke-width="1.1"/>
<path d="M911,96 l4,4 l4,-4" fill="none" stroke="#aaa" stroke-width="1.1"/>
<path d="M1040,96 l4,4 l4,-4" fill="none" stroke="#aaa" stroke-width="1.1"/>
<path d="M5.5,86 V107 M9.5,86 V107" stroke="#a0a0a0" stroke-width="1"/><path d="M6.5,86 V107 M10.5,86 V107" stroke="#fff" stroke-width="1"/>
<path d="M5.5,113 V135 M9.5,113 V135" stroke="#a0a0a0" stroke-width="1"/><path d="M6.5,113 V135 M10.5,113 V135" stroke="#fff" stroke-width="1"/>
<path d="M84.5,87 V106" stroke="#a0a0a0"/><path d="M85.5,87 V106" stroke="#fff"/>
<path d="M159.5,87 V106" stroke="#a0a0a0"/><path d="M160.5,87 V106" stroke="#fff"/>
<path d="M257.5,87 V106" stroke="#a0a0a0"/><path d="M258.5,87 V106" stroke="#fff"/>
<path d="M335.5,87 V106" stroke="#a0a0a0"/><path d="M336.5,87 V106" stroke="#fff"/>
<path d="M433.5,87 V106" stroke="#a0a0a0"/><path d="M434.5,87 V106" stroke="#fff"/>
<path d="M509.5,87 V106" stroke="#a0a0a0"/><path d="M510.5,87 V106" stroke="#fff"/>
<path d="M544.5,86 V107 M548.5,86 V107" stroke="#a0a0a0" stroke-width="1"/><path d="M545.5,86 V107 M549.5,86 V107" stroke="#fff" stroke-width="1"/>
<path d="M790.5,86 V107 M794.5,86 V107" stroke="#a0a0a0" stroke-width="1"/><path d="M791.5,86 V107 M795.5,86 V107" stroke="#fff" stroke-width="1"/>
<path d="M926.5,87 V106" stroke="#a0a0a0"/><path d="M927.5,87 V106" stroke="#fff"/>
<path d="M390.5,113 V135 M394.5,113 V135" stroke="#a0a0a0" stroke-width="1"/><path d="M391.5,113 V135 M395.5,113 V135" stroke="#fff" stroke-width="1"/>
<path d="M551.5,113 V135 M555.5,113 V135" stroke="#a0a0a0" stroke-width="1"/><path d="M552.5,113 V135 M556.5,113 V135" stroke="#fff" stroke-width="1"/>
<path d="M718.5,113 V135" stroke="#a0a0a0"/><path d="M719.5,113 V135" stroke="#fff"/>
<path d="M850.5,113 V135" stroke="#a0a0a0"/><path d="M851.5,113 V135" stroke="#fff"/>
<rect x="1.5" y="140.5" width="23" height="346" fill="#f0f0f0" stroke="#fff"/><path d="M24.5,140 V486.5 H1" stroke="#a0a0a0" fill="none"/>
<path d="M3,142.5 H22 M3,146.5 H22" stroke="#a0a0a0"/><path d="M3,143.5 H22 M3,147.5 H22" stroke="#fff"/>
<rect x="25.5" y="140.5" width="24" height="417" fill="#f0f0f0" stroke="#fff"/><path d="M49.5,140 V557.5 H25" stroke="#a0a0a0" fill="none"/>
<path d="M28,142.5 H47 M28,146.5 H47" stroke="#a0a0a0"/><path d="M28,143.5 H47 M28,147.5 H47" stroke="#fff"/>
<rect x="1314.5" y="140.5" width="25" height="367" fill="#f0f0f0" stroke="#fff"/><path d="M1339.5,140 V507.5 H1314" stroke="#a0a0a0" fill="none"/>
<path d="M1317,142.5 H1337 M1317,146.5 H1337" stroke="#a0a0a0"/><path d="M1317,143.5 H1337 M1317,147.5 H1337" stroke="#fff"/>
<rect x="1340.5" y="140.5" width="25" height="365" fill="#f0f0f0" stroke="#fff"/><path d="M1365.5,140 V505.5 H1340" stroke="#a0a0a0" fill="none"/>
<path d="M1343,142.5 H1363 M1343,146.5 H1363" stroke="#a0a0a0"/><path d="M1343,143.5 H1363 M1343,147.5 H1363" stroke="#fff"/>
<rect x="1340.5" y="506.5" width="25" height="31" fill="#f0f0f0" stroke="#fff"/><path d="M1365.5,506 V537.5 H1340" stroke="#a0a0a0" fill="none"/>
<path d="M4,218.5 H22" stroke="#a8a8a8"/><path d="M4,219.5 H22" stroke="#fff"/>
<path d="M4,312.5 H22" stroke="#a8a8a8"/><path d="M4,313.5 H22" stroke="#fff"/>
<path d="M4,385.5 H22" stroke="#a8a8a8"/><path d="M4,386.5 H22" stroke="#fff"/>
<path d="M4,434.5 H22" stroke="#a8a8a8"/><path d="M4,435.5 H22" stroke="#fff"/>
<path d="M28,305.5 H47" stroke="#a8a8a8"/><path d="M28,306.5 H47" stroke="#fff"/>
<path d="M1343,218.5 H1363" stroke="#a8a8a8"/><path d="M1343,219.5 H1363" stroke="#fff"/>
<path d="M1343,290.5 H1363" stroke="#a8a8a8"/><path d="M1343,291.5 H1363" stroke="#fff"/>
<path d="M1343,363.5 H1363" stroke="#a8a8a8"/><path d="M1343,364.5 H1363" stroke="#fff"/>
<path d="M1343,435.5 H1363" stroke="#a8a8a8"/><path d="M1343,436.5 H1363" stroke="#fff"/>
<g transform="translate(4,153)"><rect x="1.5" y="1.5" width="13" height="12" fill="#fff" stroke="#111" stroke-width="1.4"/><rect x="3" y="3" width="4" height="9" fill="#a0c8d0"/><rect x="9" y="3" width="4" height="9" fill="#a0c8d0"/><text x="9" y="17" font-size="7" font-weight="bold" font-family="Liberation Sans" fill="#111">И</text></g>
<g transform="translate(4,174)"><text x="1" y="12" font-size="9" font-family="Liberation Sans" fill="#444">X.O</text></g>
<g transform="translate(4,196)"><text x="5" y="7" font-size="7" font-family="Liberation Sans" fill="#222">1</text><path d="M3,8.5h10" stroke="#222"/><text x="3" y="16" font-size="8" font-family="Liberation Sans" fill="#222">И</text></g>
<g transform="translate(4,225)"><path d="M2,4 l11,10" stroke="#222" stroke-width="1.4"/><path d="M2,8 l4,-6 M6,12 l4,-6" stroke="#c05040" stroke-width="1"/><path d="M12,16 l4,-4 v4z" fill="#000"/></g>
<g transform="translate(4,246)"><path d="M1,10 l14,-7 v8 l-14,3z" fill="#8a1010"/><path d="M2,15 l2,2 M5,15 l2,2 M8,15 l2,2" stroke="#a06030"/></g>
<g transform="translate(4,268)"><circle cx="8" cy="8" r="7" fill="#fff" stroke="#333"/><text x="2" y="12" font-size="9" font-family="Liberation Sans" fill="#222">+И</text></g>
<g transform="translate(4,291)"><text x="0" y="12" font-size="9" font-family="Liberation Sans" fill="#333">A-1</text></g>
<g transform="translate(4,319)"><rect x="1" y="4" width="11" height="11" fill="#f0f0a0" stroke="#222"/><path d="M2,5 l3,-3 h10 v10 l-3,3" fill="#40a040" stroke="#222"/><rect x="3" y="6" width="8" height="7" fill="#20c020"/></g>
<g transform="translate(4,341)"><path d="M13,8 a5,5 0 1 1 -4,-5" fill="none" stroke="#222" stroke-width="2.2"/><path d="M5,1 l4,2 l-3,3z" fill="#222"/><circle cx="8" cy="9" r="3" fill="#40a040"/><path d="M10,7 l5,-6" stroke="#c03030"/></g>
<g transform="translate(4,362)"><circle cx="8" cy="8" r="6" fill="none" stroke="#333" stroke-width="1.6"/><rect x="5" y="5" width="6" height="6" fill="#20a020"/><circle cx="12" cy="13" r="2" fill="#e8e840" stroke="#333" stroke-width="0.6"/></g>
<g transform="translate(4,390)"><rect x="1.5" y="1.5" width="13" height="9" fill="#fff" stroke="#111"/><path d="M8,5 l5,10 h-10z" fill="#fff" stroke="#111"/></g>
<g transform="translate(4,413)"><rect x="4" y="2" width="11" height="11" fill="#ddd" stroke="#222"/><circle cx="7" cy="7" r="4.5" fill="#30a030"/><path d="M1,15 l6,-6" stroke="#c02020" stroke-width="2"/></g>
<g transform="translate(4,440)"><path d="M1,5 l9,-3 l6,3 l-9,3z" fill="#f0f0a0" stroke="#555"/><path d="M1,8 l9,-3 l6,3 l-9,3z" fill="#ddd" stroke="#555"/><path d="M1,11 l9,-3 l6,3 l-9,3z" fill="#f0f0a0" stroke="#555"/></g>
<g transform="translate(4,462)"><circle cx="7" cy="7" r="6" fill="#f8f0a0" stroke="#111" stroke-width="1.6"/><text x="4" y="11" font-size="8" font-weight="bold" font-family="Liberation Sans" fill="#111">B</text><path d="M11,11 l4,4" stroke="#111" stroke-width="2"/><path d="M0,0h3M0,0v3M16,0h-3M0,16v-3" stroke="#c03030" stroke-width="1.5"/></g>
<g transform="translate(30,151)"><path d="M1,8 l7,-6 l7,6 l-7,6z" fill="#fff" stroke="#111" stroke-width="1.3"/><path d="M7,11 l6,-9" stroke="#111" stroke-width="1.6"/></g>
<g transform="translate(30,174)"><path d="M1,4 h9 l-2,8 h-7z" fill="#80d0d8" stroke="#2a8090" stroke-dasharray="1.5,1"/><path d="M8,13 l6,-11" stroke="#111" stroke-width="1.8"/><path d="M1,15 h12" stroke="#111" stroke-dasharray="2,1"/></g>
<g transform="translate(30,197)"><path d="M3,14 l3,-3 M7,10 l3,-3 M10,5 l3,-3" stroke="#111" stroke-width="1.6"/><rect x="9" y="8" width="3" height="2" fill="#111"/></g>
<g transform="translate(30,219)"><path d="M3,14 l3,-3 M7,10 l3,-3 M10,5 l3,-3" stroke="#111" stroke-width="1.6"/><rect x="9" y="8" width="3" height="2" fill="#111"/></g>
<g transform="translate(30,237)"><rect x="1" y="5" width="15" height="2" fill="#222"/><rect x="1" y="8" width="15" height="2" fill="#222"/><rect x="1" y="11" width="15" height="2" fill="#222"/></g>
<g transform="translate(30,262)"><rect x="6" y="1" width="2" height="15" fill="#111"/><rect x="9" y="1" width="2" height="15" fill="#111"/><rect x="12" y="1" width="2" height="15" fill="#111"/></g>
<g transform="translate(30,285)"><text x="0" y="14" font-size="14" font-weight="bold" font-family="Liberation Sans" fill="#111">BS</text></g>
<g transform="translate(30,313)"><path d="M2,3h12M8,3v9" stroke="#222" stroke-width="1.5"/><ellipse cx="8" cy="12" rx="6" ry="3.5" fill="#f0d060" stroke="#222"/><rect x="5" y="5" width="6" height="5" fill="#f0d060" stroke="#222"/></g>
<g transform="translate(30,335)"><circle cx="8" cy="8" r="6.5" fill="#fff" stroke="#222" stroke-width="1.2"/><path d="M7,9 l4,-4" stroke="#222" stroke-width="1.3"/></g>
<g transform="translate(30,356)"><path d="M8,1 v13 M2,14 h13" stroke="#222" stroke-width="1.4"/><path d="M1,13v3M15,13v3M7,1h2" stroke="#c02020" stroke-width="1.4"/></g>
<g transform="translate(30,379)"><path d="M2,5 l10,-3 l3,9 l-10,3z" fill="#fff" stroke="#222" stroke-width="1.4"/><circle cx="2" cy="5" r="1.3" fill="#c02020"/><circle cx="15" cy="11" r="1.3" fill="#c02020"/></g>
<g transform="translate(30,401)"><rect x="0" y="0" width="16" height="16" fill="#c8c8c8"/><circle cx="7" cy="8" r="3" fill="none" stroke="#222"/><path d="M2,13 l3,-3 M10,8h5 M13,6l2,2l-2,2" stroke="#222" stroke-width="1.2" fill="none"/></g>
<g transform="translate(30,424)"><path d="M1,14 v-10 h6 v10 M8,14 v-10 h6 v10 M1,14h14" fill="none" stroke="#2a80c0" stroke-width="1.3"/></g>
<g transform="translate(30,446)"><path d="M1,12 l3,-4 l3,3 l3,-4 l3,3 l2,-2 v4z" fill="#e8c0c0" stroke="#222"/><path d="M1,13h14" stroke="#222" stroke-width="1.4"/></g>
<g transform="translate(30,467)"><path d="M2,15 v-12 h5 q8,1 8,12z" fill="#fff8c0" stroke="#111" stroke-width="1.6"/></g>
<g transform="translate(30,489)"><rect x="0" y="0" width="16" height="16" fill="#c8d0d0"/><path d="M3,3h1v1h-1zM7,3h1v1h-1zM11,3h1v1h-1zM3,7h1v1h-1zM7,7h1v1h-1zM11,7h1v1h-1zM3,11h1v1h-1zM7,11h1v1h-1z" fill="#111" stroke="#111"/><path d="M12,16 l4,-4 v4z" fill="#000"/></g>
<g transform="translate(30,511)"><path d="M1,1 l13,13 M14,2 l-12,12" stroke="#222" stroke-width="1.3"/><circle cx="8" cy="8" r="2" fill="#f0c080"/><path d="M12,16 l4,-4 v4z" fill="#000"/></g>
<g transform="translate(30,532)"><path d="M8,1 q6,0 6,6 q0,5 -6,5 q-6,0 -6,-5 q0,-6 6,-6z" fill="#60d0d0" stroke="#1a7080"/><path d="M8,6v10M4,16h8" stroke="#1a3040" stroke-width="1.4"/><path d="M12,16 l4,-4 v4z" fill="#000"/></g>
<g transform="translate(1319,152)"><path d="M3,13 l9,-11 l3,3 l-9,10z" fill="#e8e0a0" stroke="#555"/><path d="M3,13 l3,-3 l2,2 l-3,3z" fill="#c8a0a0" stroke="#555"/><path d="M1,15h14" stroke="#333"/></g>
<g transform="translate(1319,174)"><circle cx="5" cy="5" r="3.5" fill="#dde" stroke="#223" stroke-width="1.2"/><circle cx="10" cy="12" r="3.5" fill="#dde" stroke="#223" stroke-width="1.2"/><path d="M8,2 q6,0 6,5" fill="none" stroke="#1d4d86" stroke-width="1.6"/></g>
<g transform="translate(1319,196)"><path d="M6,3 v11 h-5z M10,3 v11 h5z" fill="#fff" stroke="#222" stroke-width="1.2"/><path d="M8,0v16" stroke="#222"/></g>
<g transform="translate(1319,219)"><path d="M2,14 h12 v-3 h-4 v-3 q0,-5 -3,-5 q-3,0 -3,5 v3 h-2z" fill="#fff" stroke="#2a70b0" stroke-width="1.4"/></g>
<g transform="translate(1319,241)"><rect x="1.5" y="1.5" width="5.5" height="5.5" fill="none" stroke="#222" stroke-width="1.3"/><rect x="9.5" y="1.5" width="5.5" height="5.5" fill="none" stroke="#222" stroke-width="1.3"/><rect x="1.5" y="9.5" width="5.5" height="5.5" fill="none" stroke="#222" stroke-width="1.3"/><rect x="9.5" y="9.5" width="5.5" height="5.5" fill="none" stroke="#222" stroke-width="1.3"/></g>
<g transform="translate(1319,263)"><path d="M8,1v14M1,8h14" stroke="#2a70b0" stroke-width="2"/><path d="M8,0 l-3,3h6zM8,16l-3,-3h6zM0,8l3,-3v6zM16,8l-3,-3v6z" fill="#2a70b0"/></g>
<g transform="translate(1319,285)"><path d="M13,9 a5.5,5.5 0 1 1 -5,-6" fill="none" stroke="#2a5a80" stroke-width="2.2"/><path d="M6,0 l5,3 l-5,3z" fill="#2a5a80"/></g>
<g transform="translate(1319,307)"><rect x="1.5" y="1.5" width="13" height="13" fill="#dde8f0" stroke="#223"/><rect x="1.5" y="7.5" width="7" height="7" fill="#fff" stroke="#223" stroke-dasharray="1.2,1"/></g>
<g transform="translate(1319,329)"><path d="M1.5,1.5 h7 l6,13 h-13z" fill="#c8d8e8" stroke="#222"/><path d="M1.5,1.5v13h6v-13" fill="#fff" stroke="#222" stroke-dasharray="1.2,1"/></g>
<g transform="translate(1319,351)"><path d="M1,9 h4 M9,9 h6" stroke="#1d4d86" stroke-width="1.3" stroke-dasharray="2,1.3"/><path d="M4,14 l7,-11" stroke="#1d4d86" stroke-width="1.5"/></g>
<g transform="translate(1319,373)"><path d="M1,9 h8" stroke="#1d4d86" stroke-width="1.3" stroke-dasharray="2,1.3"/><path d="M9,14 l5,-11" stroke="#1d4d86" stroke-width="1.5"/></g>
<g transform="translate(1319,395)"><rect x="1.5" y="4.5" width="13" height="10" fill="#fff" stroke="#222" stroke-width="1.2"/><rect x="6" y="2" width="3" height="3" fill="#335"/></g>
<g transform="translate(1319,416)"><path d="M1.5,4.5v10h13v-10" fill="#fff" stroke="#222" stroke-width="1.2"/><rect x="1" y="3" width="3" height="3" fill="#335"/><rect x="12" y="3" width="3" height="3" fill="#335"/></g>
<g transform="translate(1319,438)"><path d="M2,15 v-8 l5,-5 h8" fill="none" stroke="#222" stroke-width="1.3"/><path d="M2,6 l5,-4" stroke="#2a70b0" stroke-width="1.3"/></g>
<g transform="translate(1319,460)"><path d="M2,15 v-8 q0,-5 5,-5 h8" fill="none" stroke="#222" stroke-width="1.3"/><path d="M3,7 q1,-4 5,-4" stroke="#40a0d0" stroke-width="1.6" fill="none"/></g>
<g transform="translate(1319,483)"><path d="M2,13 l10,-9 l2,2 l-9,9z" fill="#a04020"/><circle cx="4" cy="5" r="1" fill="#e08040"/><circle cx="13" cy="13" r="1" fill="#e08040"/><circle cx="6" cy="14" r="1.5" fill="#e0a040"/></g>
<g transform="translate(1345,152)"><path d="M2,1v14M14,1v14M2,5h12" stroke="#111" stroke-width="1.6"/><path d="M2,5l3,-2v4zM14,5l-3,-2v4z" fill="#111"/></g>
<g transform="translate(1345,174)"><path d="M1,3 l4,-3 M11,16 l4,-3 M3,2 l10,12" stroke="#111" stroke-width="1.8"/></g>
<g transform="translate(1345,196)"><text x="0" y="6" font-size="5" font-family="Liberation Sans" fill="#111">Y  X</text><path d="M5,15v-8M5,15h10M9,10l4,-4M9,10v5" stroke="#111" stroke-width="1.4"/></g>
<g transform="translate(1345,224)"><circle cx="8" cy="8" r="7" fill="#eee" stroke="#333"/><path d="M4,4 l5,5" stroke="#111" stroke-width="1.4"/><path d="M4,4 l3,0.5 l-2.5,2.5z" fill="#111"/></g>
<g transform="translate(1345,247)"><circle cx="8" cy="8" r="7" fill="#eee" stroke="#333"/><path d="M4,4 l8,8" stroke="#111" stroke-width="1.4"/></g>
<g transform="translate(1345,269)"><path d="M1,15h15M1,15l8,-11" stroke="#111" stroke-width="1.4"/><path d="M7,6 q6,2 7,9" fill="none" stroke="#111" stroke-width="1.2"/></g>
<g transform="translate(1345,296)"><path d="M1,1v15M15,1v15M1,12h14" stroke="#111" stroke-width="1.5"/><path d="M3,3 l10,2 l-4,9z" fill="#d8d040" stroke="#555"/></g>
<g transform="translate(1345,318)"><path d="M1,1v15M8,5v11M15,1v6M1,5h14M1,11h7" stroke="#111" stroke-width="1.3"/></g>
<g transform="translate(1345,339)"><path d="M1,1v15M6,5v11M11,5v11M15,5v11M1,7h14" stroke="#111" stroke-width="1.3"/></g>
<g transform="translate(1345,370)"><path d="M1,10 l5,-4" stroke="#111" stroke-width="1.4"/><path d="M5,6 l8,2 l-3,7z" fill="#d8d040" stroke="#555"/><text x="10" y="6" font-size="6" font-family="Liberation Sans" fill="#111">A</text></g>
<g transform="translate(1345,391)"><rect x="0.5" y="2.5" width="15" height="11" fill="#c8dcec" stroke="#2a5a80"/><text x="1" y="12" font-size="9" font-family="Liberation Sans" fill="#1d3d66">Φ.1</text></g>
<g transform="translate(1345,414)"><circle cx="8" cy="8" r="7" fill="#f4f4f4" stroke="#333"/><path d="M8,4v8M4,8h8" stroke="#111" stroke-width="1.8"/></g>
<g transform="translate(1345,441)"><text x="3" y="10" font-size="11" font-weight="bold" font-family="Liberation Sans" fill="#1d3d86">A</text><path d="M1,13h14M1,10v6M15,10v6" stroke="#111" stroke-width="1.6"/></g>
<g transform="translate(1345,462)"><path d="M5,11 l8,-9 l2,2 l-8,9z" fill="#e0b040" stroke="#555"/><path d="M1,13h14M1,10v6M15,10v6" stroke="#111" stroke-width="1.6"/></g>
<g transform="translate(1345,485)"><path d="M1,5h14M1,12h14M1,2v6M15,2v6M1,9v6M15,9v6" stroke="#1d3d66" stroke-width="1.6"/></g>
<g transform="translate(1345,512)"><path d="M4,12 l10,-10" stroke="#555" stroke-width="1.6"/><path d="M1,13h14M1,10v6M15,10v6" stroke="#111" stroke-width="1.6"/><path d="M4,12 l5,-1 l-3,-3z" fill="#111"/></g>
<rect x="54" y="619" width="1258" height="15" fill="#f0f0f0"/>
<rect x="54.5" y="619.5" width="17" height="13.5" fill="#f4f4f4" stroke="#9a9a9a"/>
<rect x="72.0" y="619.5" width="17" height="13.5" fill="#f4f4f4" stroke="#9a9a9a"/>
<rect x="90.0" y="619.5" width="17" height="13.5" fill="#f4f4f4" stroke="#9a9a9a"/>
<rect x="108.0" y="619.5" width="17" height="13.5" fill="#f4f4f4" stroke="#9a9a9a"/>
<path d="M59.5,622 v8 M60.5,626 l4,-4 v8z" stroke="#000" fill="#000"/>
<path d="M77,626 l4,-4 v8z" fill="#000"/><path d="M95,622 l4,4 l-4,4z" fill="#000"/>
<path d="M113,622 l4,4 l-4,4z M118.5,622 v8" stroke="#000" fill="#000"/>
<path d="M129.5,619 h43.5 l-4,14 h-35.5z" fill="#000" stroke="#000"/>
<text x="137" y="630.5" font-size="11" font-family="Liberation Sans" fill="#fff">Model</text>
<path d="M173.5,619.5 h50.5 l-4,13.5 h-45z" fill="#fff" stroke="#000"/>
<text x="178" y="630.5" font-size="11" font-family="Liberation Sans" fill="#000">Layout1</text>
<path d="M612.5,767 V748.5 H645.5" stroke="#fff" fill="none"/><path d="M645.5,748.5 V767.5 H612" stroke="#a0a0a0" fill="none"/>
<text x="629.0" y="762.5" font-size="11.5" text-anchor="middle" font-family="Liberation Sans" fill="#000">SNAP</text>
<path d="M650.5,767 V748.5 H682.5" stroke="#fff" fill="none"/><path d="M682.5,748.5 V767.5 H650" stroke="#a0a0a0" fill="none"/>
<text x="666.5" y="762.5" font-size="11.5" text-anchor="middle" font-family="Liberation Sans" fill="#000">GRID</text>
<path d="M686.5,767 V748.5 H727.5" stroke="#fff" fill="none"/><path d="M727.5,748.5 V767.5 H686" stroke="#a0a0a0" fill="none"/>
<text x="707.0" y="762.5" font-size="11.5" text-anchor="middle" font-family="Liberation Sans" fill="#000">ORTHO</text>
<path d="M733.5,767 V748.5 H771.5" stroke="#fff" fill="none"/><path d="M771.5,748.5 V767.5 H733" stroke="#a0a0a0" fill="none"/>
<text x="752.5" y="762.5" font-size="11.5" text-anchor="middle" font-family="Liberation Sans" fill="#000">POLAR</text>
<path d="M777.5,767 V748.5 H817.5" stroke="#111" fill="none"/><path d="M817.5,748.5 V767" stroke="#fff"/>
<text x="798.5" y="763.5" font-size="11.5" text-anchor="middle" font-family="Liberation Sans" fill="#000">OSNAP</text>
<path d="M822.5,767 V748.5 H868.5" stroke="#fff" fill="none"/><path d="M868.5,748.5 V767.5 H822" stroke="#a0a0a0" fill="none"/>
<text x="845.5" y="762.5" font-size="11.5" text-anchor="middle" font-family="Liberation Sans" fill="#000">OTRACK</text>
<path d="M875.5,767 V748.5 H906.5" stroke="#fff" fill="none"/><path d="M906.5,748.5 V767.5 H875" stroke="#a0a0a0" fill="none"/>
<text x="891.0" y="762.5" font-size="11.5" text-anchor="middle" font-family="Liberation Sans" fill="#000">DUCS</text>
<path d="M913.5,767 V748.5 H937.5" stroke="#fff" fill="none"/><path d="M937.5,748.5 V767.5 H913" stroke="#a0a0a0" fill="none"/>
<text x="925.5" y="762.5" font-size="11.5" text-anchor="middle" font-family="Liberation Sans" fill="#000">DYN</text>
<path d="M943.5,767 V748.5 H970.5" stroke="#fff" fill="none"/><path d="M970.5,748.5 V767.5 H943" stroke="#a0a0a0" fill="none"/>
<text x="957.0" y="762.5" font-size="11.5" text-anchor="middle" font-family="Liberation Sans" fill="#000">LWT</text>
<path d="M1240.5,768 V749.5 H1300" stroke="#a0a0a0" fill="none"/>
<path d="M1252,756 l-7,10 h14z" fill="#f0e060" stroke="#444" stroke-width="0.8"/><rect x="1251" y="759" width="2" height="4" fill="#111"/><path d="M1245,753 l5,4" stroke="#999"/>
<path d="M1270,758 v-3 q0,-4 5,-4 q5,0 5,4 v3" fill="none" stroke="#807020" stroke-width="1.6"/><rect x="1264" y="757" width="12" height="9" rx="2" fill="#d8c020" stroke="#605010"/>
<rect x="1291" y="756" width="8" height="9" fill="#fff" stroke="#345"/><path d="M1293,759h4M1293,761h4M1293,763h4" stroke="#345"/><path d="M1284,757 l4,3" stroke="#999"/>
<rect x="1304" y="751" width="10" height="14" fill="#1d3d60"/><circle cx="1309" cy="756" r="2" fill="#fff"/><path d="M1309,756v8" stroke="#fff"/><circle cx="1316" cy="762" r="4" fill="#30b040"/><path d="M1313.5,762 l2,2 l3,-4" stroke="#fff" stroke-width="1.2" fill="none"/>
<path d="M1330.5,760 h7 l-3.5,4z" fill="#000"/>
<rect x="1346.5" y="749.5" width="15" height="15" fill="#a8c8e8" stroke="#2a5a80" stroke-width="1.3"/><rect x="1348.5" y="751.5" width="11" height="11" fill="#c8dcf0"/>
<path d="M1345,665 l4,-4 l4,4" fill="none" stroke="#555" stroke-width="1.5"/>
<path d="M1345,728 l4,4 l4,-4" fill="none" stroke="#777" stroke-width="1.2"/>
</svg>
<!-- BALLOONS -->
<svg class="a" style="left:1020px;top:655px" width="346" height="113" viewBox="1020 655 346 113" xmlns="http://www.w3.org/2000/svg">
<path d="M1038,663 H1150 V738.5 H1038 q-12,0 -12,-12 V675 q0,-12 12,-12z" fill="#ffffe1" stroke="#000" stroke-width="2"/>
<path d="M1234,738.5 L1251.5,756.5 V738.5" fill="#ffffe1" stroke="#000" stroke-width="1.6"/>
<path d="M1110,663 H1338 q12,0 12,12 V726.5 q0,12 -12,12 H1110 q-12,0 -12,-12 V675 q0,-12 12,-12z" fill="#ffffe1" stroke="#000" stroke-width="2"/>
<path d="M1273.5,738.5 L1291,756.5 V738.5" fill="#ffffe1" stroke="#000" stroke-width="1.6"/>
<rect x="1235" y="737" width="16" height="3" fill="#ffffe1"/><rect x="1274.5" y="737" width="16" height="3" fill="#ffffe1"/>
<circle cx="1043" cy="679.5" r="7" fill="#3a5fb8"/><rect x="1042" y="677.5" width="2.2" height="6" fill="#fff"/><circle cx="1043" cy="675" r="1.3" fill="#fff"/>
<circle cx="1116" cy="679.5" r="7" fill="#3a5fb8"/><rect x="1115" y="677.5" width="2.2" height="6" fill="#fff"/><circle cx="1116" cy="675" r="1.3" fill="#fff"/>
<rect x="1326.5" y="672.5" width="14.5" height="14.5" fill="#fff" stroke="#777"/>
<path d="M1330,676 l7.5,7.5 M1337.5,676 l-7.5,7.5" stroke="#000" stroke-width="2.2"/>
</svg>
<div class="t" style="left:1061px;top:672px;font-size:11.6px;font-weight:bold;width:36px;overflow:hidden">Commu</div>
<div class="t" style="left:1041px;top:695px;font-size:10.5px">The easy wa</div>
<div class="t" style="left:1041px;top:714px;font-size:10.5px;color:#2020b0;text-decoration:underline">Click here.</div>
<div class="t" style="left:1134px;top:672px;font-size:11.6px;font-weight:bold">Plot and Publish Job Complete</div>
<div class="t" style="left:1114px;top:695px;font-size:10.5px">No errors or warnings found</div>
<div class="t" style="left:1114px;top:714px;font-size:10.5px;color:#2020b0;text-decoration:underline">Click to view plot and publish details...</div>
</body></html>
